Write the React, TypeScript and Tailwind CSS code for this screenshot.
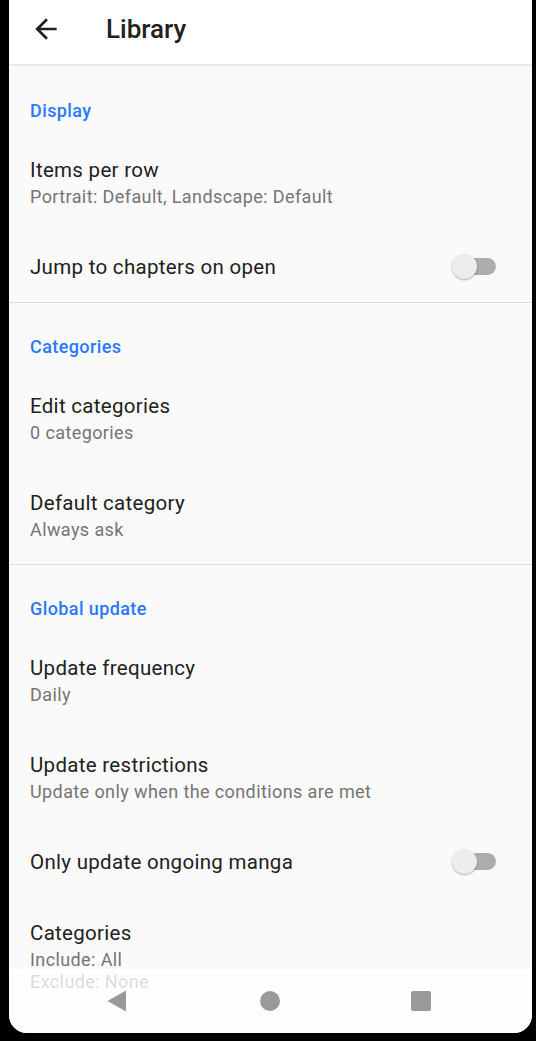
import React from "react";

function SectionHeader({ label, first }: { label: string; first?: boolean }) {
  return (
    <div
      className={`${first ? "pt-[36px]" : "pt-[33px]"} pb-[12px] px-[21px] text-[18px] leading-[22px] tracking-[0.4px] font-medium text-[#2979ff]`}
    >
      {label}
    </div>
  );
}

function TwoLine({ title, lines }: { title: string; lines: string[] }) {
  return (
    <div className="pt-[24px] pb-[23px] px-[21px]">
      <div className="text-[20.5px] leading-[24px] tracking-[0.3px] text-[#212121]">{title}</div>
      <div className="mt-[4px]">
        {lines.map((l) => (
          <div key={l} className="text-[18px] leading-[22px] tracking-[0.4px] text-[#757575]">
            {l}
          </div>
        ))}
      </div>
    </div>
  );
}

function Switch() {
  return (
    <div className="relative w-[44px] h-[26px] shrink-0">
      <div className="absolute left-[6px] right-0 top-[4.5px] h-[17px] rounded-full bg-[#adadad]" />
      <div className="absolute left-0 top-[0.5px] w-[25px] h-[25px] rounded-full bg-[#ececec] shadow-[0_1px_2px_rgba(0,0,0,0.3)]" />
    </div>
  );
}

function SwitchRow({ title }: { title: string }) {
  return (
    <div className="h-[71px] px-[21px] pr-[36px] flex items-center justify-between">
      <div className="text-[20.5px] leading-[24px] tracking-[0.3px] text-[#212121]">{title}</div>
      <Switch />
    </div>
  );
}

function Divider() {
  return <div className="h-px bg-[#dedede]" />;
}

export default function App() {
  return (
    <div className="w-[536px] h-[1041px] bg-black pl-[9px] pr-[4px] pb-[8px] font-['Roboto',sans-serif]">
      <div className="relative h-full rounded-b-[18px] overflow-hidden bg-[#fafafa] flex flex-col">
        <div className="h-[64px] shrink-0 bg-white flex items-center pb-[6px] shadow-[0_1px_3px_rgba(0,0,0,0.12)] relative z-10">
          <svg
            width="32"
            height="32"
            viewBox="0 0 24 24"
            className="ml-[21px] text-[#212121]"
            fill="currentColor"
          >
            <path d="M20 11H7.83l5.59-5.59L12 4l-8 8 8 8 1.41-1.41L7.83 13H20v-2z" />
          </svg>
          <div className="ml-[44px] text-[26px] font-medium text-[#212121] leading-[32px]">Library</div>
        </div>
        <div className="flex-1 overflow-hidden">
          <SectionHeader label="Display" first />
          <TwoLine title="Items per row" lines={["Portrait: Default, Landscape: Default"]} />
          <SwitchRow title="Jump to chapters on open" />
          <Divider />
          <SectionHeader label="Categories" />
          <TwoLine title="Edit categories" lines={["0 categories"]} />
          <TwoLine title="Default category" lines={["Always ask"]} />
          <Divider />
          <SectionHeader label="Global update" />
          <TwoLine title="Update frequency" lines={["Daily"]} />
          <TwoLine title="Update restrictions" lines={["Update only when the conditions are met"]} />
          <SwitchRow title="Only update ongoing manga" />
          <TwoLine title="Categories" lines={["Include: All", "Exclude: None"]} />
        </div>
        <div className="absolute left-0 right-0 bottom-0 h-[64px] bg-white/75 flex items-center justify-center gap-[131px] pr-[4px]">
          <svg width="20" height="22" viewBox="0 0 20 22" className="mr-[2px]">
            <path d="M19 0.5 L19 21.5 L0.5 11 Z" fill="#9a9a9a" />
          </svg>
          <div className="w-[20px] h-[20px] rounded-full bg-[#9a9a9a]" />
          <div className="w-[20px] h-[20px] rounded-[2px] bg-[#9a9a9a]" />
        </div>
      </div>
    </div>
  );
}
